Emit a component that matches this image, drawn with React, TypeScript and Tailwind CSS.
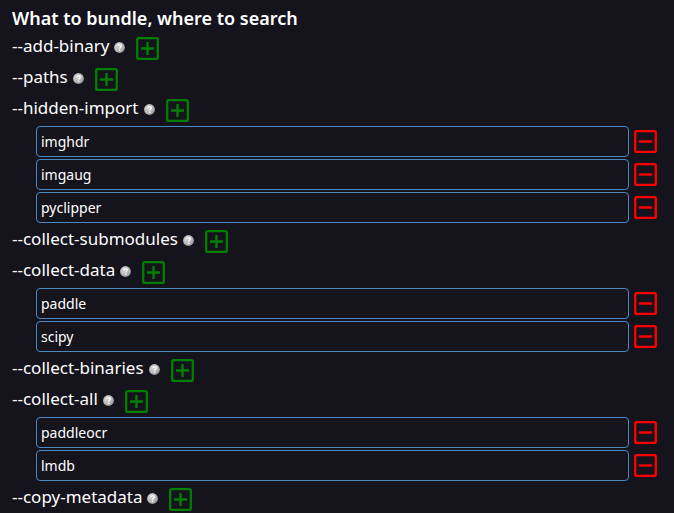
type Option = { flag: string; values: string[] };

const options: Option[] = [
  { flag: "--add-binary", values: [] },
  { flag: "--paths", values: [] },
  { flag: "--hidden-import", values: ["imghdr", "imgaug", "pyclipper"] },
  { flag: "--collect-submodules", values: [] },
  { flag: "--collect-data", values: ["paddle", "scipy"] },
  { flag: "--collect-binaries", values: [] },
  { flag: "--collect-all", values: ["paddleocr", "lmdb"] },
  { flag: "--copy-metadata", values: [] },
];

function HelpIcon() {
  return (
    <svg className="block size-[11px]" viewBox="0 0 11 11" aria-hidden="true">
      <defs>
        <radialGradient id="help-shade" cx="0.35" cy="0.35" r="0.75">
          <stop offset="0" stopColor="#d4d4d4" />
          <stop offset="0.6" stopColor="#b8b8b8" />
          <stop offset="1" stopColor="#8c8c8c" />
        </radialGradient>
      </defs>
      <circle cx="5.5" cy="5.5" r="5.4" fill="url(#help-shade)" />
      <path d="M4 4.1c0-2.1 3.3-2 3.3 0 0 1.1-1.6 1.2-1.6 2.4" fill="none" stroke="#fff" strokeWidth="1.3" />
      <circle cx="5.7" cy="8.3" r="0.8" fill="#fff" />
    </svg>
  );
}

function SquareIcon({ plus = false }: { plus?: boolean }) {
  return (
    <svg className="block size-[23px]" viewBox="0 0 23 23" fill="none" stroke="currentColor" aria-hidden="true">
      <rect x="1.2" y="1.2" width="20.6" height="20.6" rx="1.4" strokeWidth="2.3" />
      <path d={plus ? "M5 11.5h13M11.5 5v13" : "M5 11.5h13"} strokeWidth="2.4" />
    </svg>
  );
}

export default function App() {
  return (
    <main className="min-h-screen bg-[#15131c] pl-3 pr-[17px] pt-1 font-['Noto_Sans',sans-serif] text-white">
      <h2 className="h-7 text-lg font-semibold">What to bundle, where to search</h2>
      {options.map(({ flag, values }) => (
        <section key={flag}>
          <div className="flex h-[31px] items-center pt-0.5">
            <span className="pb-[5px] text-[17px] leading-6">{flag}</span>
            <button type="button" aria-label={`Help for ${flag}`} className="ml-[5px] pb-0.5">
              <HelpIcon />
            </button>
            <button type="button" aria-label={`Add ${flag}`} className="ml-[11px] text-[#008000]">
              <SquareIcon plus />
            </button>
          </div>
          {values.length > 0 && (
            <ul className="flex flex-col gap-0.5 pb-0.5 pl-6 pt-px">
              {values.map((value) => (
                <li key={value} className="flex items-center gap-[5px]">
                  <input
                    type="text"
                    defaultValue={value}
                    aria-label={`${flag} value`}
                    className="h-[31px] min-w-0 flex-1 rounded border border-[#4689c4] bg-transparent px-1 text-sm text-white outline-none"
                  />
                  <button type="button" aria-label={`Remove ${value}`} className="text-[#ff0000]">
                    <SquareIcon />
                  </button>
                </li>
              ))}
            </ul>
          )}
        </section>
      ))}
    </main>
  );
}
